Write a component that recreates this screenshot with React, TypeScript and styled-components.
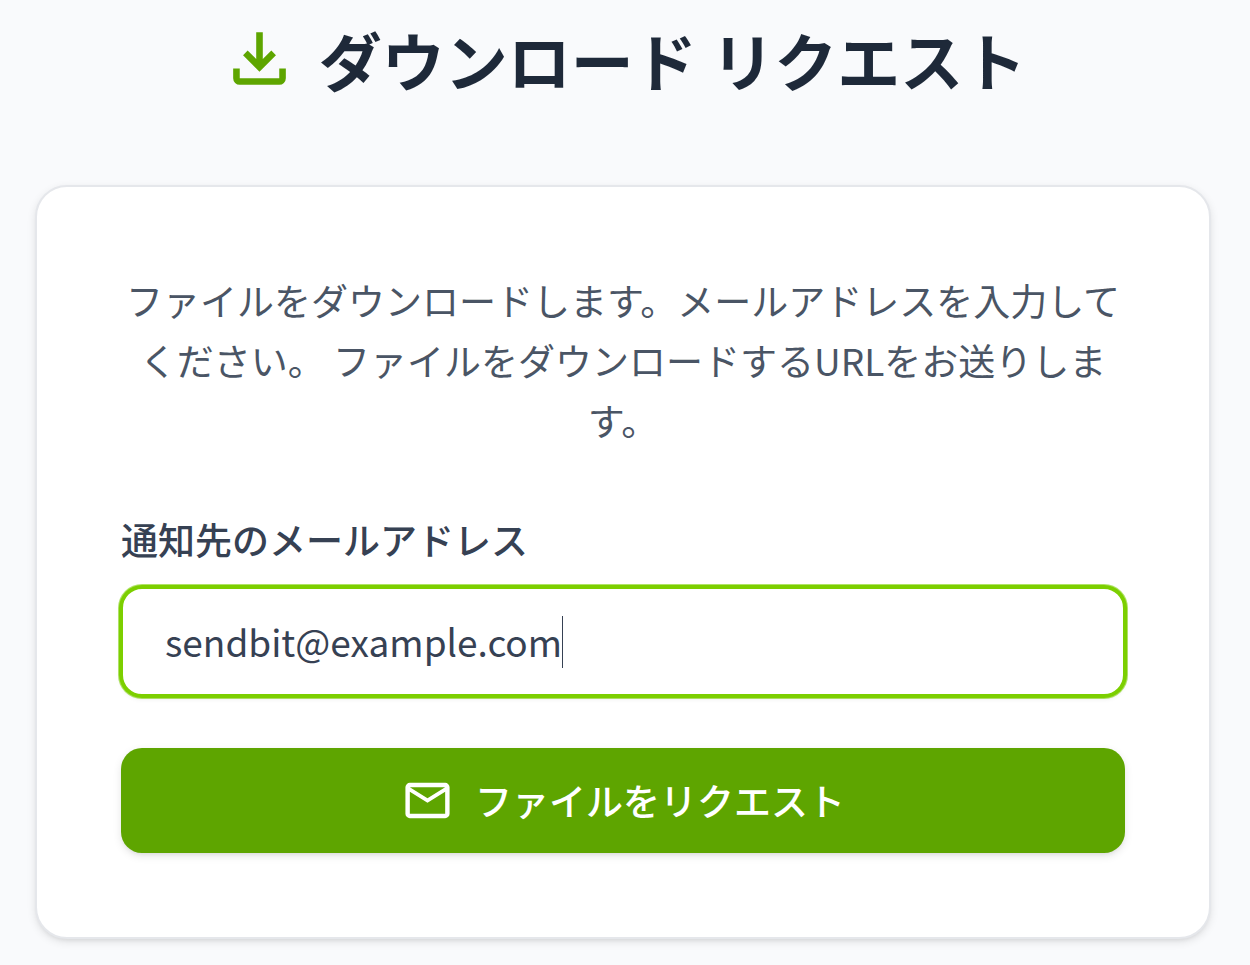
import React, { useState } from "react";
import styled, { createGlobalStyle } from "styled-components";

const GlobalStyle = createGlobalStyle`
  *, *::before, *::after { box-sizing: border-box; }
  body {
    margin: 0;
    background: #f9fafc;
    color: #364153;
    font-family: "Noto Sans CJK JP", sans-serif;
  }
  button, input { font: inherit; color: inherit; }
`;

const Page = styled.main`
  padding: 19px 39px 24px 35px;
`;

const Header = styled.header`
  display: flex;
  justify-content: center;
  align-items: flex-start;
  gap: 20px;
  margin-bottom: 86px;
  color: #5ea500;
`;

const Title = styled.h1`
  margin: 0;
  font-size: 63px;
  line-height: 80px;
  font-weight: 700;
  color: #1e2939;
`;

const Icon = styled.svg<{ $size: number }>`
  flex: none;
  width: ${(p) => p.$size}px;
  height: ${(p) => p.$size}px;
  fill: currentColor;
`;

const Card = styled.section`
  padding: 83px 84px 84px;
  background: #fff;
  border: 2px solid #e5e7eb;
  border-radius: 32px;
  box-shadow: 0 3px 8px rgba(0, 0, 0, 0.1), 0 3px 5px -3px rgba(0, 0, 0, 0.1);
`;

const Description = styled.p`
  margin: 0 0 63px;
  font-size: 37px;
  line-height: 60px;
  text-align: center;
  color: #4a5565;
`;

const Form = styled.form`
  display: flex;
  flex-direction: column;
`;

const Label = styled.label`
  margin-bottom: 21px;
  font-size: 37px;
  line-height: 53px;
  font-weight: 500;
`;

const Field = styled.div`
  display: flex;
  align-items: center;
  height: 109px;
  margin-bottom: 52px;
  padding: 0 42px;
  border: 2px solid #7ccf00;
  border-radius: 21px;
  background: #fff;
  box-shadow: 0 0 0 2px #7ccf00, 0 0 0 3px rgba(124, 207, 0, 0.6),
    0 3px 5px rgba(0, 0, 0, 0.08);
`;

const EmailInput = styled.input`
  field-sizing: content;
  max-width: 100%;
  padding: 0;
  border: 0;
  outline: 0;
  background: transparent;
  font-size: 37px;
  line-height: 53px;
  caret-color: transparent;
`;

const Caret = styled.span`
  width: 1px;
  height: 52px;
  background: #364153;
`;

const SubmitButton = styled.button`
  display: flex;
  justify-content: center;
  align-items: center;
  gap: 21px;
  height: 105px;
  padding: 0 42px;
  border: 0;
  border-radius: 21px;
  background: #5ea500;
  color: #fff;
  font-size: 37px;
  line-height: 53px;
  font-weight: 500;
  cursor: pointer;
  box-shadow: 0 3px 8px rgba(0, 0, 0, 0.1), 0 3px 5px -3px rgba(0, 0, 0, 0.1);
`;

export default function App() {
  const [email, setEmail] = useState("sendbit@example.com");

  return (
    <>
      <GlobalStyle />
      <Page>
        <Header>
          <Icon $size={79} viewBox="0 0 24 24" aria-hidden="true">
            <path d="m12 16-5-5 1.4-1.45 2.6 2.6V4h2v8.15l2.6-2.6L17 11l-5 5Zm-6 4q-.825 0-1.413-.588T4 18v-3h2v3h12v-3h2v3q0 .825-.588 1.413T18 20H6Z" />
          </Icon>
          <Title>ダウンロード リクエスト</Title>
        </Header>
        <Card>
          <Description>
            ファイルをダウンロードします。メールアドレスを入力してください。
            ファイルをダウンロードするURLをお送りします。
          </Description>
          <Form onSubmit={(e) => e.preventDefault()}>
            <Label htmlFor="email">通知先のメールアドレス</Label>
            <Field>
              <EmailInput
                id="email"
                type="email"
                value={email}
                onChange={(e) => setEmail(e.target.value)}
              />
              <Caret />
            </Field>
            <SubmitButton type="submit">
              <Icon $size={53} viewBox="0 0 24 24" aria-hidden="true">
                <path d="M4 20q-.825 0-1.413-.588T2 18V6q0-.825.588-1.413T4 4h16q.825 0 1.413.588T22 6v12q0 .825-.588 1.413T20 20H4Zm8-7L4 8v10h16V8l-8 5Zm0-2 8-5H4l8 5Z" />
              </Icon>
              ファイルをリクエスト
            </SubmitButton>
          </Form>
        </Card>
      </Page>
    </>
  );
}
